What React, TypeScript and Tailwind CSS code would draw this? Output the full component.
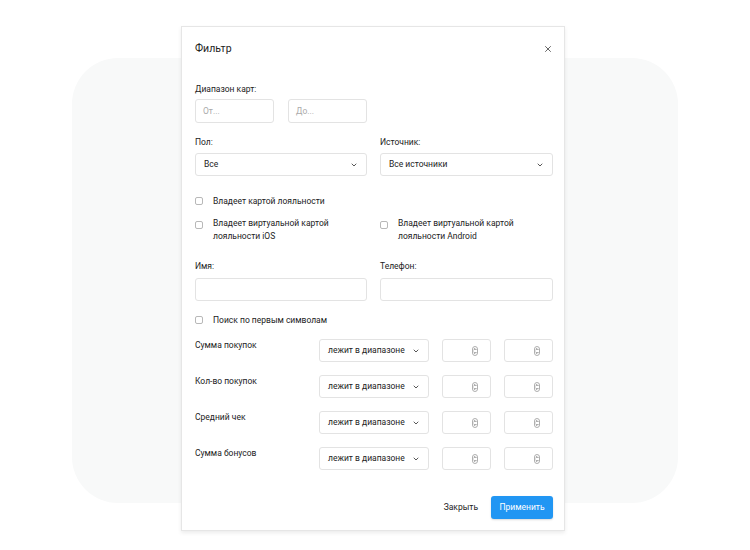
import React from "react";

const font = { fontFamily: "Roboto, 'Noto Sans', sans-serif" };

function Chevron() {
  return (
    <svg width="6" height="4" viewBox="0 0 6 4" fill="none">
      <path d="M1 1 L3 3 L5 1" stroke="#444" strokeWidth="0.9" strokeLinecap="round" strokeLinejoin="round" />
    </svg>
  );
}

function Spinner() {
  return (
    <svg width="6" height="10" viewBox="0 0 6 10" fill="none">
      <rect x="0.5" y="0.5" width="5" height="9" rx="2.5" stroke="#9a9a9a" strokeWidth="0.8" />
      <path d="M1.9 3.7 L3 2.6 L4.1 3.7" stroke="#555" strokeWidth="0.8" strokeLinecap="round" strokeLinejoin="round" />
      <path d="M1.9 6.3 L3 7.4 L4.1 6.3" stroke="#555" strokeWidth="0.8" strokeLinecap="round" strokeLinejoin="round" />
    </svg>
  );
}

function Box() {
  return <span className="inline-block h-[8px] w-[8px] shrink-0 rounded-[2px] border border-[#b8b8b8] bg-white" />;
}

function Select({ value, w }: { value: string; w: string }) {
  return (
    <div className={`flex h-[23px] items-center justify-between rounded-[3px] border border-[#e3e3e3] bg-white pl-[8px] pr-[9px] text-[8.5px] text-[#222] ${w}`}>
      <span>{value}</span>
      <Chevron />
    </div>
  );
}

function NumInput() {
  return (
    <div className="flex h-[23px] w-[49px] shrink-0 items-center justify-end rounded-[3px] border border-[#e3e3e3] bg-white pr-[12px]">
      <Spinner />
    </div>
  );
}

const rows = ["Сумма покупок", "Кол-во покупок", "Средний чек", "Сумма бонусов"];

export default function App() {
  return (
    <div className="relative h-[550px] w-[750px] overflow-hidden bg-white" style={font}>
      <div className="absolute left-[72px] top-[58px] h-[445px] w-[606px] rounded-[46px] bg-[#f8f9f9]" />
      <div className="relative ml-[181px] mt-[26px] flex h-[505px] w-[384px] flex-col border border-[#e6e6e6] bg-white pl-[13px] pr-[11px] shadow-[0_2px_4px_rgba(0,0,0,0.08)]">
        <div className="mt-[14px] flex h-[16px] items-center justify-between">
          <span className="text-[10.5px] text-[#222]">Фильтр</span>
          <svg width="6" height="6" viewBox="0 0 6 6" className="mr-[2px]">
            <path d="M0.5 0.5 L5.5 5.5 M5.5 0.5 L0.5 5.5" stroke="#555" strokeWidth="0.9" strokeLinecap="round" />
          </svg>
        </div>

        <div className="mt-[26px] h-[12px] text-[8.5px] leading-[12px] text-[#222]">Диапазон карт:</div>
        <div className="mt-[4px] flex gap-[14px]">
          <div className="flex h-[24px] w-[79px] items-center rounded-[3px] border border-[#e3e3e3] pl-[7px] text-[8.5px] text-[#aaa]">От...</div>
          <div className="flex h-[24px] w-[79px] items-center rounded-[3px] border border-[#e3e3e3] pl-[7px] text-[8.5px] text-[#aaa]">До...</div>
        </div>

        <div className="mt-[13px] grid grid-cols-[172px_1fr] gap-x-[13px]">
          <div>
            <div className="h-[12px] text-[8.5px] leading-[12px] text-[#222]">Пол:</div>
            <div className="mt-[5px]"><Select value="Все" w="w-full" /></div>
          </div>
          <div>
            <div className="h-[12px] text-[8.5px] leading-[12px] text-[#222]">Источник:</div>
            <div className="mt-[5px]"><Select value="Все источники" w="w-full" /></div>
          </div>
        </div>

        <div className="mt-[19px] flex h-[12px] items-center gap-[10px] text-[8.5px] leading-[12px] text-[#222]">
          <Box />
          <span>Владеет картой лояльности</span>
        </div>

        <div className="mt-[10px] grid grid-cols-[172px_1fr] gap-x-[13px] text-[8.5px] leading-[13px] text-[#222]">
          <div className="flex gap-[10px]">
            <span className="pt-[3px]"><Box /></span>
            <span>Владеет виртуальной картой<br />лояльности iOS</span>
          </div>
          <div className="flex gap-[10px]">
            <span className="pt-[3px]"><Box /></span>
            <span>Владеет виртуальной картой<br />лояльности Android</span>
          </div>
        </div>

        <div className="mt-[17px] grid grid-cols-[172px_1fr] gap-x-[13px]">
          <div>
            <div className="h-[12px] text-[8.5px] leading-[12px] text-[#222]">Имя:</div>
            <div className="mt-[6px] h-[23px] rounded-[3px] border border-[#e3e3e3]" />
          </div>
          <div>
            <div className="h-[12px] text-[8.5px] leading-[12px] text-[#222]">Телефон:</div>
            <div className="mt-[6px] h-[23px] rounded-[3px] border border-[#e3e3e3]" />
          </div>
        </div>

        <div className="mt-[13px] flex h-[12px] items-center gap-[10px] text-[8.5px] leading-[12px] text-[#222]">
          <Box />
          <span>Поиск по первым символам</span>
        </div>

        <div className="mt-[13px] flex flex-col gap-[13px]">
          {rows.map((r) => (
            <div key={r} className="flex items-start">
              <div className="w-[124px] shrink-0 text-[8.5px] leading-[12px] text-[#222]">{r}</div>
              <Select value="лежит в диапазоне" w="w-[110px] shrink-0" />
              <div className="ml-[13px]"><NumInput /></div>
              <div className="ml-[13px]"><NumInput /></div>
            </div>
          ))}
        </div>

        <div className="mt-auto mb-[11px] flex items-center justify-end gap-[13px]">
          <span className="text-[8.5px] text-[#222]">Закрыть</span>
          <div className="flex h-[23px] w-[62px] items-center justify-center rounded-[3px] bg-[#2196f3] text-[8.5px] text-white shadow-[0_1px_2px_rgba(0,0,0,0.15)]">Применить</div>
        </div>
      </div>
    </div>
  );
}
